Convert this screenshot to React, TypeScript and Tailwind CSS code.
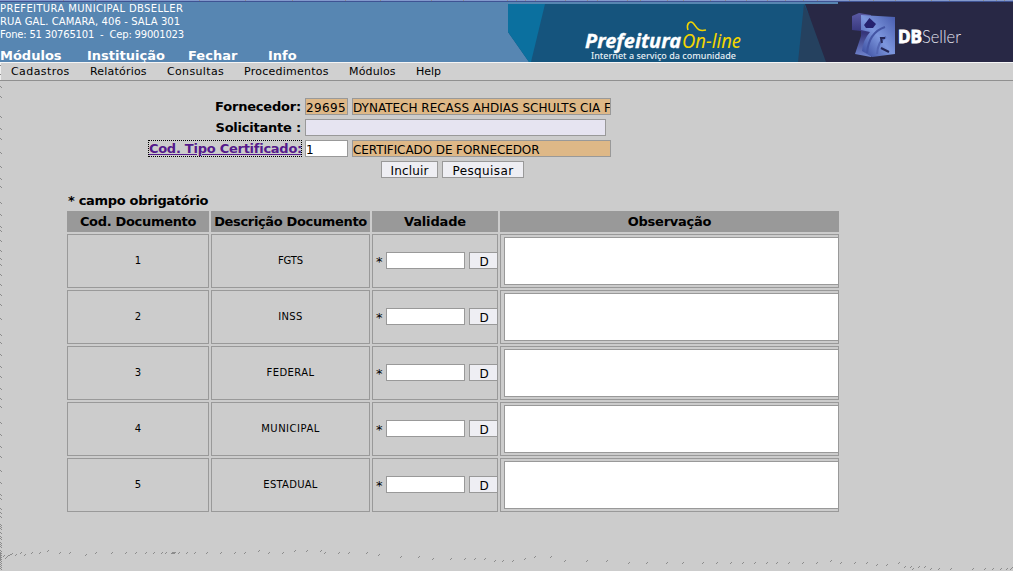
import React from "react";

const modules = [
  { label: "Módulos", width: "w-[87px]" },
  { label: "Instituição", width: "w-[101px]" },
  { label: "Fechar", width: "w-[80px]" },
  { label: "Info", width: "w-[60px]" },
];

const menu = [
  { label: "Cadastros", style: "w-[79px] tracking-[0.42px]" },
  { label: "Relatórios", style: "w-[77px] tracking-[0.2px]" },
  { label: "Consultas", style: "w-[77px] tracking-[0.35px]" },
  { label: "Procedimentos", style: "w-[105px] tracking-[0.25px]" },
  { label: "Módulos", style: "w-[67px] tracking-[0.15px]" },
  { label: "Help", style: "w-[60px]" },
];

const documents = [
  { name: "FGTS", spacing: "tracking-[-0.1px]" },
  { name: "INSS", spacing: "tracking-[0.4px]" },
  { name: "FEDERAL", spacing: "tracking-[0.42px]" },
  { name: "MUNICIPAL", spacing: "tracking-[0.5px]" },
  { name: "ESTADUAL", spacing: "tracking-[0.25px]" },
];

const columns = [
  { title: "Cod. Documento", spacing: "tracking-[-0.32px]" },
  { title: "Descrição Documento", spacing: "tracking-[-0.35px]" },
  { title: "Validade", spacing: "tracking-[-0.15px]" },
  { title: "Observação", spacing: "tracking-[-0.25px]" },
];

const specks: [number, number][] = [
  [3, 556], [5, 558], [7, 556], [9, 555], [11, 554], [15, 555], [20, 553], [24, 555], [31, 553], [39, 553], [47, 551],
  [59, 553], [69, 553], [85, 555], [95, 553], [111, 553], [125, 553], [135, 553], [145, 553], [153, 553], [161, 553],
  [165, 553], [171, 553], [172, 553], [173, 553], [174, 553], [178, 553], [186, 553], [194, 553], [206, 553], [220, 553],
  [234, 553], [244, 553], [258, 551], [268, 553], [282, 553], [294, 551], [306, 551], [320, 551], [324, 553], [338, 553],
  [348, 553], [366, 553], [378, 555], [400, 557], [418, 557], [432, 559], [450, 559], [464, 559], [474, 559], [484, 559],
  [494, 561], [502, 561], [512, 561], [524, 559], [534, 557], [550, 557], [564, 561], [586, 561], [606, 561], [628, 563],
  [646, 563], [666, 563], [682, 563], [702, 563], [716, 563], [730, 563], [742, 563], [754, 563], [766, 563], [776, 563],
  [788, 563], [802, 563], [816, 563], [830, 561], [840, 563], [854, 563], [866, 563], [876, 565], [886, 565], [898, 563],
  [904, 567], [910, 567], [912, 569], [918, 567], [924, 567], [930, 569], [938, 569], [950, 569], [972, 569], [984, 569],
  [992, 569], [1000, 569], [1006, 569], [1010, 569], [1011, 568],
];

const edge = [
  86, 96, 116, 128, 138, 152, 166, 178, 186, 202, 214, 226, 230, 240, 250, 258, 264, 274, 284, 294, 304, 318, 334, 342,
  354, 366, 376, 388, 398, 406, 422, 434, 446, 456, 470, 482, 494, 498, 508, 512, 516, 524, 526, 528, 532, 536, 538,
  542, 544, 546, 550, 552, 554, 556, 558, 560, 562, 564, 566, 568,
];

const topTicks = [63, 95, 131, 199, 245, 292, 345, 380, 431, 463, 507, 516, 525, 535, 565, 587, 597, 627, 640, 667, 683, 710, 725, 746, 767, 785, 803, 817, 849, 873, 895, 931, 949, 983, 996, 1004];

function Banner() {
  return (
    <svg width="505" height="60" viewBox="508 2 505 60" className="block shrink-0">
      <defs>
        <linearGradient id="cube" x1="0" y1="1" x2="1" y2="0">
          <stop offset="0" stopColor="#344598" />
          <stop offset=".5" stopColor="#7d97de" />
          <stop offset="1" stopColor="#465aac" />
        </linearGradient>
        <linearGradient id="side" x1="0" y1="0" x2="0" y2="1">
          <stop offset="0" stopColor="#5a5aa4" />
          <stop offset=".45" stopColor="#35357a" />
          <stop offset="1" stopColor="#7186d0" />
        </linearGradient>
      </defs>
      <path d="M508 4H838V62H529L508 32Z" fill="#15547d" />
      <path d="M508 4H545L531 62H529L508 32Z" fill="#0b709f" />
      <path d="M804 4L798 62H830Z" fill="#25415f" />
      <path d="M838 2H1013V62H826L805 4H838Z" fill="#282845" />
      <path d="M508 2H838V4H508Z" fill="#5786b2" />
      <text x="585" y="47.5" fontFamily="Noto Sans, sans-serif" fontSize="20" fontWeight="700" fontStyle="italic" fill="#fff" stroke="#fff" strokeWidth=".3" textLength="96" lengthAdjust="spacingAndGlyphs">Prefeitura</text>
      <text x="682" y="47.5" fontFamily="Noto Sans, sans-serif" fontSize="20" fontStyle="italic" fill="#f3d500" textLength="59" lengthAdjust="spacingAndGlyphs">On-line</text>
      <path d="M688 30C686 24 690 20 693 23C697 27 697 32 706 30" fill="none" stroke="#f3d500" strokeWidth="1.6" />
      <text x="591" y="58.5" fontFamily="Noto Sans, sans-serif" fontSize="9.5" fontWeight="500" fill="#e7f0f5" textLength="145" lengthAdjust="spacingAndGlyphs">Internet a serviço da comunidade</text>
      <path d="M852 16L859 13L871 15L871 57L855 54L861 36L861 31L852 30Z" fill="url(#side)" />
      <path d="M861 15L895 17L895 54L872 57L862 51Q863 40 870 32L861 30Z" fill="url(#cube)" />
      <path d="M869.500 18L876 24L873 28H866L864 25Z" fill="#25226f" />
      <path d="M885 27C873 31 868 41 867 53" fill="none" stroke="#4455a4" strokeWidth="2" />
      <path d="M886 37Q878 41 877 54" fill="none" stroke="#5366b3" strokeWidth="2" />
      <path d="M885 38L881 38L882 43M881 48L889 52" fill="none" stroke="#252858" strokeWidth="2" />
      <text x="898" y="43" fontFamily="Noto Sans, sans-serif" fontSize="17" fontWeight="700" fill="#fff" stroke="#fff" strokeWidth=".8" textLength="24" lengthAdjust="spacingAndGlyphs">DB</text>
      <text x="922" y="43" fontFamily="Lato, sans-serif" fontSize="18.500" fontWeight="300" fill="#e4e4ee" textLength="39" lengthAdjust="spacingAndGlyphs">Seller</text>
    </svg>
  );
}

function Header() {
  return (
    <header className="h-[81px]">
      <div className="h-0.5 border-b border-[#3f5393] bg-[#8399cc]" />
      <div className="flex h-[60px] justify-between bg-[#5786b2] text-white">
        <div className="w-[400px]">
          <div className="h-[46px] whitespace-pre text-[10px] leading-[13px]">
            <div className="tracking-[0.35px]">PREFEITURA MUNICIPAL DBSELLER</div>
            <div className="tracking-[0.1px]">RUA GAL. CAMARA, 406 - SALA 301</div>
            <div className="tracking-[-0.19px]">Fone: 51 30765101  -  Cep: 99001023</div>
          </div>
          <nav className="flex text-[13px] leading-4 font-bold">
            {modules.map((m) => <a key={m.label} className={m.width}>{m.label}</a>)}
          </nav>
        </div>
        <Banner />
      </div>
      <nav className="flex h-[19px] border-t border-b border-t-[#f5f5f5] border-b-[#909090] bg-[#d0d0d0] pl-[11px] text-[11px] leading-[17px]">
        {menu.map((m) => <a key={m.label} className={m.style}>{m.label}</a>)}
      </nav>
    </header>
  );
}

function Field({ className, value = "" }: { className: string; value?: string }) {
  return (
    <div className={`h-[17px] overflow-hidden border border-[#999] pt-px text-[12px] leading-[17px] whitespace-nowrap ${className}`}>
      {value}
    </div>
  );
}

function Button({ className, label }: { className: string; label: string }) {
  return (
    <button className={`h-[17px] border border-[#999] bg-[#eeeef3] pt-px text-[12px] leading-[17px] ${className}`}>{label}</button>
  );
}

function CertificateForm() {
  return (
    <section className="flex flex-col gap-1 pt-[17px] text-[13px] leading-[17px]">
      <div className="flex h-[17px] gap-1">
        <div className="w-[301px] text-right font-bold tracking-[-0.2px]">Fornecedor:</div>
        <Field className="w-[43px] bg-[#deb887] tracking-[0.35px]" value="29695" />
        <Field className="w-[259px] bg-[#deb887]" value="DYNATECH RECASS AHDIAS SCHULTS CIA F" />
      </div>
      <div className="flex h-[17px] gap-1">
        <div className="w-[301px] text-right font-bold tracking-[-0.22px]">Solicitante :</div>
        <Field className="w-[301px] bg-[#e6e4f1]" />
      </div>
      <div className="flex h-[17px] gap-1">
        <div className="flex w-[301px] justify-end">
          <a className="-mr-px h-[17px] pl-px font-bold tracking-[-0.26px] whitespace-nowrap text-[#551a8b] underline outline-1 -outline-offset-1 outline-dotted outline-black">Cod. Tipo Certificado:</a>
        </div>
        <Field className="w-[43px] bg-white" value="1" />
        <Field className="w-[259px] bg-[#deb887] tracking-[-0.09px]" value="CERTIFICADO DE FORNECEDOR" />
      </div>
      <div className="flex h-[17px] gap-1 pl-[381px]">
        <Button className="w-[57px] tracking-[0.15px]" label="Incluir" />
        <Button className="w-[82px] tracking-[0.4px]" label="Pesquisar" />
      </div>
    </section>
  );
}

function DocumentRow({ index, name, spacing }: { index: number; name: string; spacing: string }) {
  const cell = "flex items-center justify-center border border-[#999] pb-0.5";
  return (
    <>
      <div className={cell}>{index}</div>
      <div className={`${cell} ${spacing}`}>{name}</div>
      <div className="flex items-center overflow-hidden border border-[#999] pb-px pl-[3px]">
        <span className="w-[10px] shrink-0 pt-0.5 text-[13px]">*</span>
        <Field className="mr-1 w-[79px] shrink-0 bg-white" />
        <Button className="w-[30px] shrink-0" label="D" />
      </div>
      <div className="overflow-hidden border border-[#999] pt-0.5 pl-[3px]">
        <textarea className="block h-12 w-[335px] resize-none border border-[#999] bg-white" />
      </div>
    </>
  );
}

export default function App() {
  return (
    <div className="relative h-[571px] w-[1013px] overflow-hidden bg-[#ccc] font-['DejaVu_Sans',sans-serif] text-black">
      <Header />
      <CertificateForm />
      <main className="pt-[14px] pl-[67px]">
        <div className="h-[19px] pl-px text-[13px] leading-[17px] font-bold tracking-[-0.32px]">* campo obrigatório</div>
        <div className="grid w-[772px] auto-rows-[54px] grid-cols-[142px_159px_126px_339px] grid-rows-[21px] gap-0.5 text-[10px]">
          {columns.map((c) => (
            <div key={c.title} className={`bg-[#999] text-center text-[13px] leading-[21px] font-bold whitespace-nowrap ${c.spacing}`}>{c.title}</div>
          ))}
          {documents.map((d, i) => <DocumentRow key={d.name} index={i + 1} name={d.name} spacing={d.spacing} />)}
        </div>
      </main>
      <svg className="pointer-events-none absolute inset-0" width="1013" height="571" shapeRendering="crispEdges" fill="#8c8c8c">
        <rect x="0" y="63" width="1" height="17" fill="#eee" />
        {[65, 74].map((y) => <rect key={y} x="0" y={y} width="1" height="1" />)}
        {specks.map(([x, y], i) => <path key={i} d={`M${x} ${y}h1v-1h1v1h-1v1h-1z`} />)}
        {edge.map((y) => <path key={y} d={`M0 ${y}h1v1h1v1h-1v-1h-1z`} />)}
        <rect x="0" y="553" width="1" height="8" />
        {topTicks.map((x) => <rect key={x} x={x} y="0" width="1" height="1" />)}
      </svg>
    </div>
  );
}
